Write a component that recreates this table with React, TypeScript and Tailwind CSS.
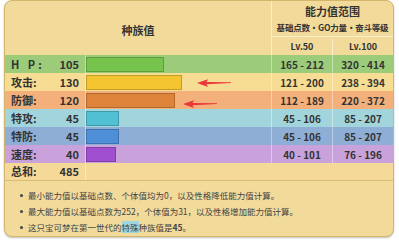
const font = { fontFamily: '"Noto Sans CJK SC", "Noto Sans", sans-serif' }

type Row = {
  label: string
  value: number
  rowBg: string
  barBg: string
  lv50: string
  lv100: string
}

const rows: Row[] = [
  { label: 'H P:', value: 105, rowBg: 'bg-[#9ccb7a]', barBg: 'bg-[#76c44e]', lv50: '165 - 212', lv100: '320 - 414' },
  { label: '攻击:', value: 130, rowBg: 'bg-[#f7dc93]', barBg: 'bg-[#f4c431]', lv50: '121 - 200', lv100: '238 - 394' },
  { label: '防御:', value: 120, rowBg: 'bg-[#f3b07b]', barBg: 'bg-[#de843a]', lv50: '112 - 189', lv100: '220 - 372' },
  { label: '特攻:', value: 45, rowBg: 'bg-[#a2d5db]', barBg: 'bg-[#50c0d2]', lv50: '45 - 106', lv100: '85 - 207' },
  { label: '特防:', value: 45, rowBg: 'bg-[#8eaed6]', barBg: 'bg-[#4f8fd7]', lv50: '45 - 106', lv100: '85 - 207' },
  { label: '速度:', value: 40, rowBg: 'bg-[#c9a2dc]', barBg: 'bg-[#a04fd0]', lv50: '40 - 101', lv100: '76 - 196' },
]

function Arrow({ top, left }: { top: number; left: number }) {
  return (
    <svg
      className="absolute"
      style={{ top, left }}
      width="34"
      height="10"
      viewBox="0 0 34 10"
    >
      <path d="M0 5 L11 1.2 L9.5 4 L34 4.2 L34 5 L9.5 6.3 L11 9 Z" fill="#e8383a" />
    </svg>
  )
}

export default function App() {
  return (
    <div className="w-[399px] h-[240px] bg-white pl-[4px] pt-0 text-[#333]" style={font}>
      <div className="relative w-[390px] h-[237px] rounded-[8px] border border-[#d2b66c] bg-[#f2da9b] overflow-hidden shadow-[0_1px_2px_rgba(0,0,0,0.25)]">
        {/* header */}
        <div className="grid grid-cols-[267px_61px_60px] h-[54px]">
          <div className="row-span-2 flex items-center justify-center border-r border-[#fbeecb] text-[11px] font-bold pt-[4px]">
            种族值
          </div>
          <div className="col-span-2 h-[36px] flex flex-col items-center justify-start border-b border-[#fbeecb]">
            <div className="text-[11px] font-bold leading-[14px] mt-[3px]">能力值范围</div>
            <div className="text-[8.5px] font-bold leading-[12px] mt-[3px] whitespace-nowrap tracking-[-0.2px]">
              基础点数・GO力量・奋斗等级
            </div>
          </div>
          <div className="flex items-center justify-center text-[9px] font-bold border-r border-[#fbeecb]">Lv.50</div>
          <div className="flex items-center justify-center text-[9px] font-bold">Lv.100</div>
        </div>

        {/* stat rows */}
        {rows.map((r) => (
          <div key={r.label} className={`grid grid-cols-[81px_186px_61px_60px] h-[18px] ${r.rowBg}`}>
            <div className="flex items-center justify-between pl-[6px] pr-[6px] text-[11px] font-bold border-r border-white/40">
              <span className={r.label === 'H P:' ? 'tracking-[3px]' : ''}>{r.label}</span>
              <span>{r.value}</span>
            </div>
            <div className="flex items-center border-r border-white/40">
              <div
                className={`h-[15px] border border-black/20 ${r.barBg}`}
                style={{ width: Math.round(r.value * 0.74) }}
              />
            </div>
            <div className="flex items-center justify-center text-[10px] font-bold border-r border-white/40">{r.lv50}</div>
            <div className="flex items-center justify-center text-[10px] font-bold">{r.lv100}</div>
          </div>
        ))}

        <div className="grid grid-cols-[81px_307px] h-[18px] bg-[#f5d999] border-b border-[#d8bd77]">
          <div className="flex items-center justify-between pl-[6px] pr-[6px] text-[11px] font-bold border-r border-white/40">
            <span>总和:</span>
            <span>485</span>
          </div>
          <div />
        </div>

        {/* notes */}
        <ul className="pt-[6px] pl-[15px] text-[8.5px] leading-[16px] text-[#444]">
          <li className="flex items-center gap-[5px]">
            <span className="w-[3px] h-[3px] bg-[#444] rounded-full" />
            最小能力值以基础点数、个体值均为0，以及性格降低能力值计算。
          </li>
          <li className="flex items-center gap-[5px]">
            <span className="w-[3px] h-[3px] bg-[#444] rounded-full" />
            最大能力值以基础点数为252，个体值为31，以及性格增加能力值计算。
          </li>
          <li className="flex items-center gap-[5px]">
            <span className="w-[3px] h-[3px] bg-[#444] rounded-full" />
            <span>
              这只宝可梦在第一世代的<span className="bg-[#9fd6e0]">特殊</span>种族值是<b>45</b>。
            </span>
          </li>
        </ul>

        <Arrow top={77} left={192} />
        <Arrow top={98} left={178} />
      </div>
    </div>
  )
}
